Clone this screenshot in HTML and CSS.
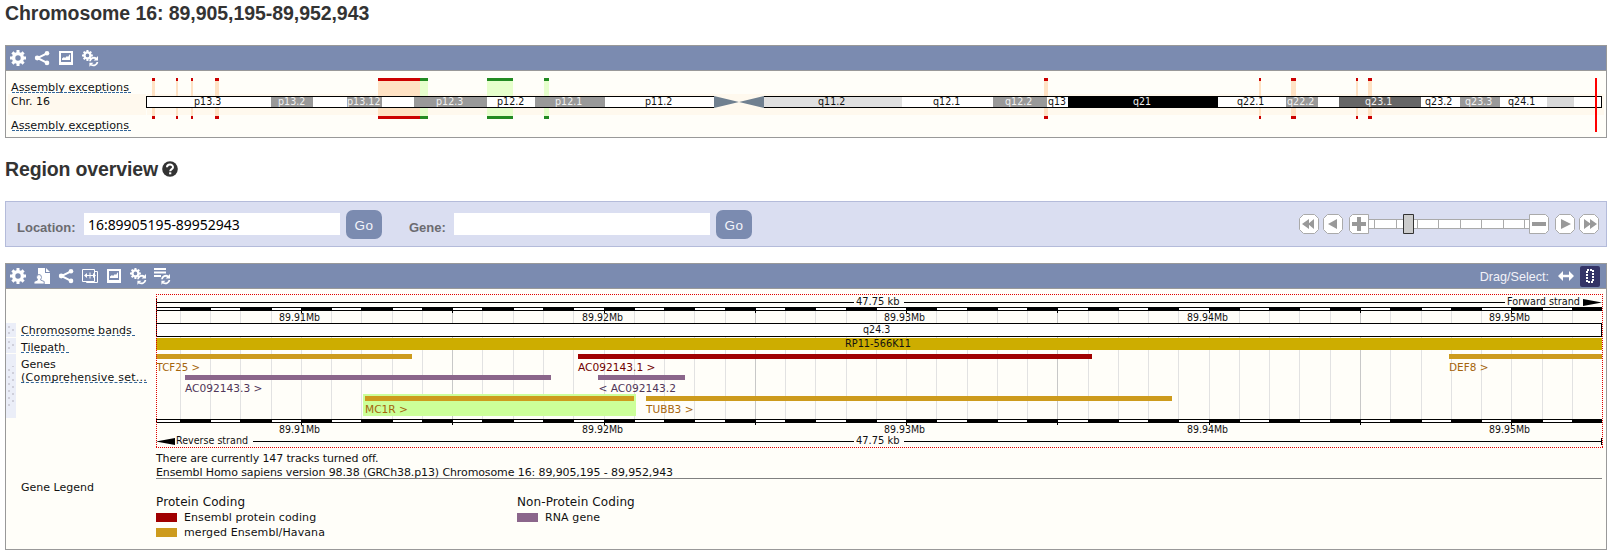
FILE: index.html
```html
<!DOCTYPE html>
<html lang="en">
<head>
<meta charset="utf-8">
<title>Chromosome 16: 89,905,195-89,952,943</title>
<link rel="stylesheet" href="styles.css">
</head>
<body>
<svg class="defs" width="0" height="0">
  <defs>
    <g id="cog">
      <circle cx="8" cy="8" r="4.4" fill="none" stroke="#fff" stroke-width="3.4"/>
      <path d="M8 0v3M8 13v3M0 8h3M13 8h3M2.4 2.4l2 2M11.6 11.6l2 2M2.4 13.6l2-2M11.6 4.4l2-2" stroke="#fff" stroke-width="3" fill="none"/>
    </g>
    <g id="cycle" fill="none" stroke="#fff" stroke-width="1.8">
      <path d="M8 11.2A4 3.6 0 0 1 14.2 8.4M15.4 12A4 3.6 0 0 1 9.2 14.8"/>
      <path d="M16 6v4.4h-4.4zM7.4 16.8v-4h4z" fill="#fff" stroke="none"/>
    </g>
    <symbol id="i-gear" viewBox="0 0 16 16"><use href="#cog"/></symbol>
    <symbol id="i-share" viewBox="0 0 16 16">
      <path d="M13 3.4L3.5 8l9.5 4.8" fill="none" stroke="#fff" stroke-width="2"/>
      <circle cx="3.2" cy="8" r="2.4" fill="#fff"/><circle cx="13" cy="3.2" r="2.3" fill="#fff"/><circle cx="13" cy="12.9" r="2.3" fill="#fff"/>
    </symbol>
    <symbol id="i-image" viewBox="0 0 16 16">
      <path d="M1 1h14v14H1zM3 3v9h10V3z" fill="#fff" fill-rule="evenodd"/>
      <path d="M4 10V8.500l2-1.500 1 1 2-2 1 1 1.500-2.500H12V10z" fill="#fff"/>
    </symbol>
    <symbol id="i-gearcycle" viewBox="0 0 17 17">
      <use href="#cog" transform="scale(.68)"/><use href="#cycle"/>
    </symbol>
    <symbol id="i-listcycle" viewBox="0 0 17 17">
      <path d="M0 1h12M0 4.500h12M0 8h7" stroke="#fff" stroke-width="2"/><use href="#cycle"/>
    </symbol>
    <symbol id="i-user" viewBox="0 0 16 16">
      <path d="M4 0h7v5h5v11H4z" fill="#fff"/><path d="M12 0l4 4h-4z" fill="#fff"/>
      <path d="M0 16v-2.500l3.500-1.500L2.500 9.500Q2.500 6.500 5 6.500T7.500 9.500L6.500 12l3.700 1.500V16z" fill="#fff" stroke="#7b8bb0" stroke-width=".9"/>
    </symbol>
    <symbol id="i-resize" viewBox="0 0 16 16">
      <path d="M.5 1.500h12v12H.5zM12.500 3.500h3v11h-11v-1" fill="none" stroke="#fff"/>
      <path d="M4 7.500h8M8 4.500v6" stroke="#fff"/>
      <path d="M2 7.500l3-2.500v5zM14 7.500l-3-2.500v5z" fill="#fff"/>
    </symbol>
    <symbol id="i-drag" viewBox="0 0 16 10">
      <path d="M0 5l5-5v3.800h6V0l5 5-5 5V6.200H5V10z" fill="#fff"/>
    </symbol>
  </defs>
</svg>

<h1 class="title">Chromosome 16: 89,905,195-89,952,943</h1>

<section class="panel">
  <div class="toolbar">
    <svg class="icon"><use href="#i-gear"/></svg>
    <svg class="icon"><use href="#i-share"/></svg>
    <svg class="icon"><use href="#i-image"/></svg>
    <svg class="icon wide"><use href="#i-gearcycle"/></svg>
  </div>
  <svg id="ideogram" class="plot" width="1600" height="66" viewBox="6 71 1600 66"></svg>
</section>

<h2 class="title sub">Region overview
  <svg class="help" viewBox="0 0 16 16"><circle cx="8" cy="8" r="7.800" fill="#333"/><path d="M5 6.300C5 2.700 11 2.700 11 6.200 11 8.200 8.200 8 8.200 10.300" fill="none" stroke="#fff" stroke-width="2"/><path d="M7.100 11.300h2.200v2H7.100z" fill="#fff"/></svg>
</h2>

<section class="navbar">
  <label class="name loc">Location:</label>
  <div class="field">16:89905195-89952943</div>
  <div class="go">Go</div>
  <label class="name gene">Gene:</label>
  <div class="field"></div>
  <div class="go">Go</div>
  <svg class="zoomer" width="300" height="20" viewBox="1299 214 300 20">
    <g fill="#fff" stroke="#aaa">
      <path d="M1303.500 214.500h11l4 4v11l-4 4h-11l-4-4v-11z"/>
      <path d="M1327.500 214.500h11l4 4v11l-4 4h-11l-4-4v-11z"/>
      <path d="M1368.500 219.500h162v9h-162z"/>
      <path d="M1374.500 219v10M1396.500 219v10M1417.500 219v10M1438.500 219v10M1460.500 219v10M1481.500 219v10M1503.500 219v10M1524.500 219v10"/>
      <path d="M1352.500 214.500h16v19h-16l-3-3v-13z"/>
      <path d="M1529.500 214.500h16l3 3v13l-3 3h-16z"/>
      <path d="M1559.500 214.500h11l4 4v11l-4 4h-11l-4-4v-11z"/>
      <path d="M1583.500 214.500h11l4 4v11l-4 4h-11l-4-4v-11z"/>
    </g>
    <g fill="#999">
      <path d="M1309 219v10l-7-5zM1314 219v10l-6-5zM1337 219v10l-9-5zM1561 219v10l10-5zM1584 219v10l7-5zM1590 219v10l7-5z"/>
      <path d="M1357 217h4v5h5v4h-5v5h-4v-5h-5v-4h5zM1532 222h14v4h-14z"/>
    </g>
    <path d="M1403.500 214.500h10v19h-10z" fill="#ccc" stroke="#333"/>
  </svg>
</section>

<section class="panel">
  <div class="toolbar">
    <svg class="icon"><use href="#i-gear"/></svg>
    <svg class="icon"><use href="#i-user"/></svg>
    <svg class="icon"><use href="#i-share"/></svg>
    <svg class="icon"><use href="#i-resize"/></svg>
    <svg class="icon"><use href="#i-image"/></svg>
    <svg class="icon wide"><use href="#i-gearcycle"/></svg>
    <svg class="icon wide"><use href="#i-listcycle"/></svg>
    <span class="drag">Drag/Select:</span>
    <svg class="arrow"><use href="#i-drag"/></svg>
    <span class="marquee"><svg width="8" height="14"><rect x="1" y="1" width="6" height="12" fill="none" stroke="#fff" stroke-width="2" stroke-dasharray="2 1"/></svg></span>
  </div>
  <div class="region">
    <div class="labels">
      <div class="track t1"><i class="grip"></i><div><span class="lbl dash w1">Chromosome bands</span></div></div>
      <div class="track t2"><i class="grip"></i><div><span class="lbl dash w2">Tilepath</span></div></div>
      <div class="track t3"><i class="grip big"></i><div><span class="lbl">Genes</span><span class="lbl dash w3">(Comprehensive set...</span></div></div>
      <span class="lbl legendlabel">Gene Legend</span>
    </div>
    <div class="main">
      <svg id="tracks" class="plot" width="1450" height="162" viewBox="156 289 1450 162"></svg>
      <div class="note n1">There are currently 147 tracks turned off.</div>
      <div class="note n2">Ensembl Homo sapiens version 98.38 (GRCh38.p13) Chromosome 16: 89,905,195 - 89,952,943</div>
      <div class="legend">
        <div class="group">
          <div class="head">Protein Coding</div>
          <div class="item"><b class="sw red"></b>Ensembl protein coding</div>
          <div class="item"><b class="sw gold"></b>merged Ensembl/Havana</div>
        </div>
        <div class="group">
          <div class="head">Non-Protein Coding</div>
          <div class="item"><b class="sw purple"></b>RNA gene</div>
        </div>
      </div>
    </div>
  </div>
</section>
<script src="tracks.js"></script>
</body>
</html>
```
FILE: styles.css
```css
* { box-sizing: border-box; }
body { margin: 0; padding: 0 4px 0 5px; background: #fff; font-family: "Liberation Sans", Arial, sans-serif; font-size: 13px; }
.defs { display: block; }
.title { margin: 0; padding-top: 1px; height: 45px; font-size: 19.5px; line-height: 24px; font-weight: bold; color: #333; letter-spacing: -.06px; }
.sub { display: flex; align-items: center; gap: 4px; height: 24px; padding: 0; margin: 19px 0 20px; letter-spacing: -.13px; }
.help { width: 16px; height: 16px; }

.panel { width: 1602px; border: 1px solid #999; background: #fffef9; }
.toolbar { display: flex; align-items: center; gap: 8px; height: 25px; padding-left: 4px; background: #7b8bb0; border-bottom: 1px solid #999; }
.icon { width: 16px; height: 16px; flex: none; }
.icon.wide { width: 17px; height: 17px; margin-right: -1px; }
.drag { margin-left: auto; margin-right: 1px; padding-top: 2px; color: #f2f2f8; font-size: 12.6px; line-height: 24px; }
.arrow { width: 16px; height: 10px; }
.marquee { display: flex; align-items: center; justify-content: center; width: 20px; height: 21px; margin: 0 6px 0 -2px; background: #336; border-radius: 2px; }
.plot { display: block; font-family: "DejaVu Sans", sans-serif; }

.navbar { display: flex; align-items: center; width: 1602px; height: 46px; margin-bottom: 16px; background: #dadef1; border: 1px solid #b4bbda; }
.name { font-weight: bold; color: #6b6b70; line-height: 20px; padding-top: 7px; }
.loc { width: 67px; margin-left: 11px; }
.gene { width: 45px; margin-left: 27px; }
.field { width: 256px; height: 22px; padding-left: 4px; background: #fff; color: #000; font: 14px/23px "Noto Sans", sans-serif; letter-spacing: -.04px; }
.go { width: 36px; height: 29px; margin-left: 6px; border-radius: 7px; background: #7b8bb0; color: #f4f4fa; font-size: 13.5px; line-height: 31px; text-align: center; letter-spacing: .4px; }
.zoomer { margin-left: auto; margin-right: 7px; }

.region { display: grid; grid-template-columns: 150px 1450px; height: 260px; font: 11px/16px "DejaVu Sans", sans-serif; color: #111; }
.labels { padding-top: 34px; }
.track { display: flex; gap: 5px; }
.t1 { height: 14px; margin-bottom: 1px; letter-spacing: .05px; }
.t2 { height: 15px; margin-bottom: 1px; }
.t2 .lbl { margin-top: 2px; }
.t3 { height: 64px; }
.t3 div { padding-top: 3px; }
.grip {
  width: 10px;
  background:
    linear-gradient(#cfcfda, #cfcfda) 2px 3px / 2px 2px no-repeat,
    linear-gradient(#cfcfda, #cfcfda) 6px 6px / 2px 2px no-repeat,
    linear-gradient(#cfcfda, #cfcfda) 2px 9px / 2px 2px no-repeat,
    #ebeef8;
}
.grip.big {
  background:
    linear-gradient(#ebeef8 12px, transparent 12px 52px, #ebeef8 52px),
    conic-gradient(from 270deg at 2px 2px, #cfcfda 90deg, transparent 0) 2px 1px / 10px 7px,
    conic-gradient(from 270deg at 2px 2px, #cfcfda 90deg, transparent 0) 6px 4px / 10px 7px,
    #ebeef8;
}
.lbl { display: block; width: max-content; height: 13px; white-space: nowrap; }
.dash { border-bottom: 1px dashed #369; }
.w1 { width: 114px; }
.w2 { width: 48px; }
.w3 { width: 126px; letter-spacing: .24px; }
.legendlabel { margin: 62px 0 0 15px; }
.note { height: 14px; white-space: nowrap; }
.n1 { letter-spacing: -.13px; }
.n2 { width: 1446px; letter-spacing: -.11px; border-bottom: 1px solid #808080; }
.legend { display: grid; grid-template-columns: 361px 361px; padding-top: 15px; }
.head { font-size: 12px; line-height: 16px; letter-spacing: .1px; }
.item { display: flex; align-items: center; gap: 7px; height: 15px; line-height: 15px; letter-spacing: .1px; }
.sw { width: 21px; height: 9px; }
.red { background: #a00000; }
.gold { background: #cd9b1d; }
.purple { background: #8b668b; }
```
FILE: tracks.js
```js
const NS = 'http://www.w3.org/2000/svg';
function add(svg, tag, attrs, text) {
  const el = document.createElementNS(NS, tag);
  for (const k in attrs) el.setAttribute(k, attrs[k]);
  if (text) el.textContent = text;
  svg.appendChild(el);
}
// Box from (x1,y1) to (x2,y2)
const box = (s, x1, y1, x2, y2, fill) => add(s, 'rect', { x: x1, y: y1, width: x2 - x1, height: y2 - y1, fill });
// Text running from x1 to x2 on baseline y
const label = (s, t, x1, x2, y, size, fill = '#111') =>
  add(s, 'text', { x: x1, y, 'font-size': size, fill, textLength: x2 - x1, lengthAdjust: 'spacingAndGlyphs' }, t);

// Chromosome ideogram
const ideo = document.getElementById('ideogram');
box(ideo, 8, 94, 146, 115, '#fff9ee');
box(ideo, 147, 94, 1604, 115, '#fff9ee');
const RED = ['#c00', '#ffe2c4'], GREEN = ['#228b22', '#e6ffcc'];
[[152, 155, RED], [176, 178, RED], [191, 193, RED], [215, 219, RED], [378, 420, RED], [420, 428, GREEN],
 [487, 513, GREEN], [544, 549, GREEN], [1044, 1048, RED], [1259, 1261, RED], [1291, 1296, RED],
 [1356, 1358, RED], [1368, 1372, RED]].forEach(([a, b, c]) => {
  box(ideo, a, 81, b, 116, c[1]);
  box(ideo, a, 78, b, 81, c[0]);
  box(ideo, a, 116, b, 119, c[0]);
});
box(ideo, 146, 96, 714, 108, '#000');
box(ideo, 764, 96, 1602, 108, '#000');
[[147, 271, '#fff', 'p13.3', 194], [271, 313, '#999', 'p13.2', 278], [313, 347, '#fff'], [347, 382, '#999', 'p13.12', 347],
 [382, 414, '#fff'], [414, 487, '#999', 'p12.3', 436], [487, 535, '#fff', 'p12.2', 497], [535, 605, '#999', 'p12.1', 555],
 [605, 714, '#fff', 'p11.2', 645], [764, 902, '#e0e0e0', 'q11.2', 818], [902, 993, '#fff', 'q12.1', 933],
 [993, 1047, '#999', 'q12.2', 1005], [1047, 1068, '#fff', 'q13', 1048], [1068, 1218, '#000', 'q21', 1133],
 [1218, 1286, '#fff', 'q22.1', 1237], [1286, 1318, '#999', 'q22.2', 1287], [1318, 1339, '#fff'],
 [1339, 1421, '#666', 'q23.1', 1365], [1421, 1460, '#fff', 'q23.2', 1425], [1460, 1500, '#999', 'q23.3', 1465],
 [1500, 1547, '#fff', 'q24.1', 1508], [1547, 1574, '#d9d9d9'], [1574, 1601, '#fff']].forEach(([a, b, c, t, x]) => {
  box(ideo, a, 97, b, 107, c);
  if (t) label(ideo, t, x, x + { 3: 18, 5: 27.3, 6: 33.5 }[t.length], 105, 9.6, ['#999', '#666', '#000'].includes(c) ? '#f2f2f2' : '#111');
});
add(ideo, 'path', { d: 'M714 96L739 102L714 108zM764 96L739 102L764 108z', fill: '#708090' });
box(ideo, 1595, 78, 1597, 132, '#f00');
label(ideo, 'Assembly exceptions', 11, 129, 91, 11);
label(ideo, 'Chr. 16', 11, 50, 105, 11);
label(ideo, 'Assembly exceptions', 11, 129, 129, 11);
[92.5, 130.5].forEach(y => add(ideo, 'path', { d: `M12 ${y}H131`, stroke: '#369', 'stroke-dasharray': '3 1' }));

// Region tracks
const tr = document.getElementById('tracks');
const pos = kb => Math.floor(301.4 + 30.26 * (kb - 910));
for (let kb = 906; kb <= 952; kb++) box(tr, pos(kb), 311, pos(kb) + 1, 419, kb % 10 === 5 ? '#c8c8c8' : '#e2e2e2');
[307, 419].forEach(y => {
  box(tr, 156, y, 1602, y + 4, '#000');
  for (let kb = 905; kb <= 952; kb += 2) box(tr, kb === 905 ? 157 : pos(kb) + 1, y + 1, pos(kb + 1), y + 3, '#fff');
  for (let kb = 910; kb <= 950; kb += 5) {
    box(tr, pos(kb), y + 3, pos(kb) + 1, y + 6, '#000');
    if (kb % 10 === 0) label(tr, `89.${kb / 10}Mb`, pos(kb) - 22, pos(kb) + 19, y + 14, 9.6);
  }
});
// Strand lines
box(tr, 156, 302, 854, 303, '#000');
box(tr, 904, 302, 1505, 303, '#000');
box(tr, 253, 441, 854, 442, '#000');
box(tr, 904, 441, 1602, 442, '#000');
box(tr, 1601, 438, 1602, 445, '#000');
box(tr, 156, 299, 157, 336, '#000');
add(tr, 'path', { d: 'M1583 299L1602 302.500L1583 306zM175 438L156 441.500L175 445z', fill: '#000' });
label(tr, '47.75 kb', 856, 899.5, 305, 9.6);
label(tr, '47.75 kb', 856, 899.5, 444, 9.6);
label(tr, 'Forward strand', 1507, 1580, 305, 9.6);
label(tr, 'Reverse strand', 176, 248, 444, 9.6);
// Band and tilepath
box(tr, 156, 323, 1602, 337, '#000');
box(tr, 157, 324, 1601, 336, '#fff');
label(tr, 'q24.3', 863, 890.3, 333, 9.6);
box(tr, 156, 338, 1602, 350, '#cdad00');
label(tr, 'RP11-566K11', 845, 911, 347, 9.6);
// Genes
box(tr, 363, 394, 636, 416, '#cf9');
const GOLD = ['#cd9b1d', '#a5650c'], PURPLE = ['#8b668b', '#4f3558'], CRIMSON = ['#a00000', '#700000'];
[[156, 412, 354, GOLD, 'TCF25 >', 156.5, 200], [578, 1092, 354, CRIMSON, 'AC092143.1 >', 578, 655.5],
 [1449, 1602, 354, GOLD, 'DEF8 >', 1449, 1488.5], [185, 551, 375, PURPLE, 'AC092143.3 >', 185, 262.5],
 [598, 685, 375, PURPLE, '< AC092143.2', 598.5, 676], [365, 634, 396, GOLD, 'MC1R >', 365, 408],
 [646, 1172, 396, GOLD, 'TUBB3 >', 646, 693.5]].forEach(([a, b, y, c, t, x1, x2]) => {
  box(tr, a, y, b, y + 5, c[0]);
  label(tr, t, x1, x2, y + 17, 11, c[1]);
});
// Selection frame, one pixel on and one off
add(tr, 'path', { d: 'M156 294.500H1603M156 447.500H1603M156.500 294V448M1602.500 294V448', stroke: '#e00000', 'stroke-dasharray': '1 1' });
```
